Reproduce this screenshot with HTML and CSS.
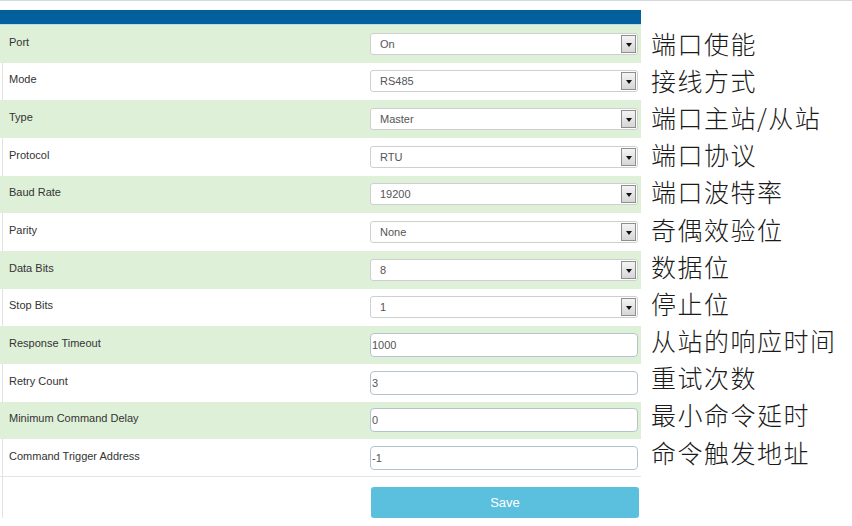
FILE: index.html
```html
<!DOCTYPE html>
<html>
<head>
<meta charset="utf-8">
<link rel="stylesheet" href="styles.css">
</head>
<body>
<div class="page">
  <div class="form">
    <div class="head"></div>
    <div class="row alt"><div class="label">Port</div><div class="ctl"><div class="select"><span>On</span><span class="arrow"></span></div></div></div>
    <div class="row"><div class="label">Mode</div><div class="ctl"><div class="select"><span>RS485</span><span class="arrow"></span></div></div></div>
    <div class="row alt"><div class="label">Type</div><div class="ctl"><div class="select"><span>Master</span><span class="arrow"></span></div></div></div>
    <div class="row"><div class="label">Protocol</div><div class="ctl"><div class="select"><span>RTU</span><span class="arrow"></span></div></div></div>
    <div class="row alt"><div class="label">Baud Rate</div><div class="ctl"><div class="select"><span>19200</span><span class="arrow"></span></div></div></div>
    <div class="row"><div class="label">Parity</div><div class="ctl"><div class="select"><span>None</span><span class="arrow"></span></div></div></div>
    <div class="row alt"><div class="label">Data Bits</div><div class="ctl"><div class="select"><span>8</span><span class="arrow"></span></div></div></div>
    <div class="row"><div class="label">Stop Bits</div><div class="ctl"><div class="select"><span>1</span><span class="arrow"></span></div></div></div>
    <div class="row alt"><div class="label">Response Timeout</div><div class="ctl"><div class="input">1000</div></div></div>
    <div class="row"><div class="label">Retry Count</div><div class="ctl"><div class="input">3</div></div></div>
    <div class="row alt"><div class="label">Minimum Command Delay</div><div class="ctl"><div class="input">0</div></div></div>
    <div class="row last"><div class="label">Command Trigger Address</div><div class="ctl"><div class="input">-1</div></div></div>
    <div class="actions"><div class="ctl"><div class="btn">Save</div></div></div>
  </div>
  <div class="notes">
    <div class="note">端口使能</div>
    <div class="note">接线方式</div>
    <div class="note">端口主站/从站</div>
    <div class="note">端口协议</div>
    <div class="note">端口波特率</div>
    <div class="note">奇偶效验位</div>
    <div class="note">数据位</div>
    <div class="note">停止位</div>
    <div class="note">从站的响应时间</div>
    <div class="note">重试次数</div>
    <div class="note">最小命令延时</div>
    <div class="note">命令触发地址</div>
  </div>
</div>
</body>
</html>
```
FILE: styles.css
```css
html, body {
  margin: 0;
  padding: 0;
  background: #fff;
}
body {
  font-family: "Liberation Sans", Arial, sans-serif;
  color: #333;
  border-top: 1px solid #d4d8dc;
  height: 525px;
  overflow: hidden;
}
.page {
  display: flex;
  padding-top: 9px;
}
.form {
  width: 638px;
  flex: none;
  display: flex;
  flex-direction: column;
  border-left: 1px solid #e2e2e2;
  margin-left: 2px;
}
.head {
  height: 14px;
  background: #03609c;
  border-bottom: 1px solid #b9dcef;
  margin-left: -3px;
}
.row {
  height: 37.67px;
  display: flex;
  align-items: center;
  margin-left: -3px;
  padding-left: 3px;
}
.row.alt {
  background: #dff0d8;
}
.row.last {
  border-bottom: 1px solid #e4e4e4;
  height: 37px;
}
.label {
  width: 367px;
  flex: none;
  padding-left: 6px;
  box-sizing: border-box;
  font-size: 11px;
  color: #333;
  margin-top: -4px;
}
.ctl {
  width: 268px;
  flex: none;
}
.select {
  height: 22px;
  box-sizing: border-box;
  border: 1px solid #cfcfcf;
  border-radius: 3px;
  background: #fff;
  display: flex;
  align-items: center;
  justify-content: space-between;
  padding-left: 9px;
  padding-right: 1px;
  font-size: 11px;
  color: #555;
}
.arrow {
  width: 15px;
  height: 18px;
  box-sizing: border-box;
  border: 1px solid #8e8e8e;
  background: linear-gradient(#f4f4f4, #d6d6d6);
  position: relative;
}
.arrow::after {
  content: "";
  position: absolute;
  left: 4px;
  top: 7px;
  border-left: 3px solid transparent;
  border-right: 3px solid transparent;
  border-top: 4px solid #111;
}
.input {
  height: 24px;
  box-sizing: border-box;
  border: 1px solid #b5c3d1;
  border-radius: 4px;
  background: #fff;
  display: flex;
  align-items: center;
  padding-left: 1px;
  font-size: 11px;
  color: #555;
}
.actions {
  display: flex;
  padding-left: 368px;
  padding-top: 10px;
}
.btn {
  height: 31px;
  border-radius: 3px;
  background: #5bc0de;
  color: #fff;
  font-size: 13px;
  display: flex;
  align-items: center;
  justify-content: center;
}
.notes {
  padding-left: 10px;
  padding-top: 14px;
  display: flex;
  flex-direction: column;
}
.note {
  height: 37.2px;
  display: flex;
  align-items: center;
  font-family: "Noto Sans CJK SC", sans-serif;
  font-weight: 300;
  font-size: 25px;
  letter-spacing: 1.5px;
  color: #1a1a1a;
  white-space: nowrap;
}
```
